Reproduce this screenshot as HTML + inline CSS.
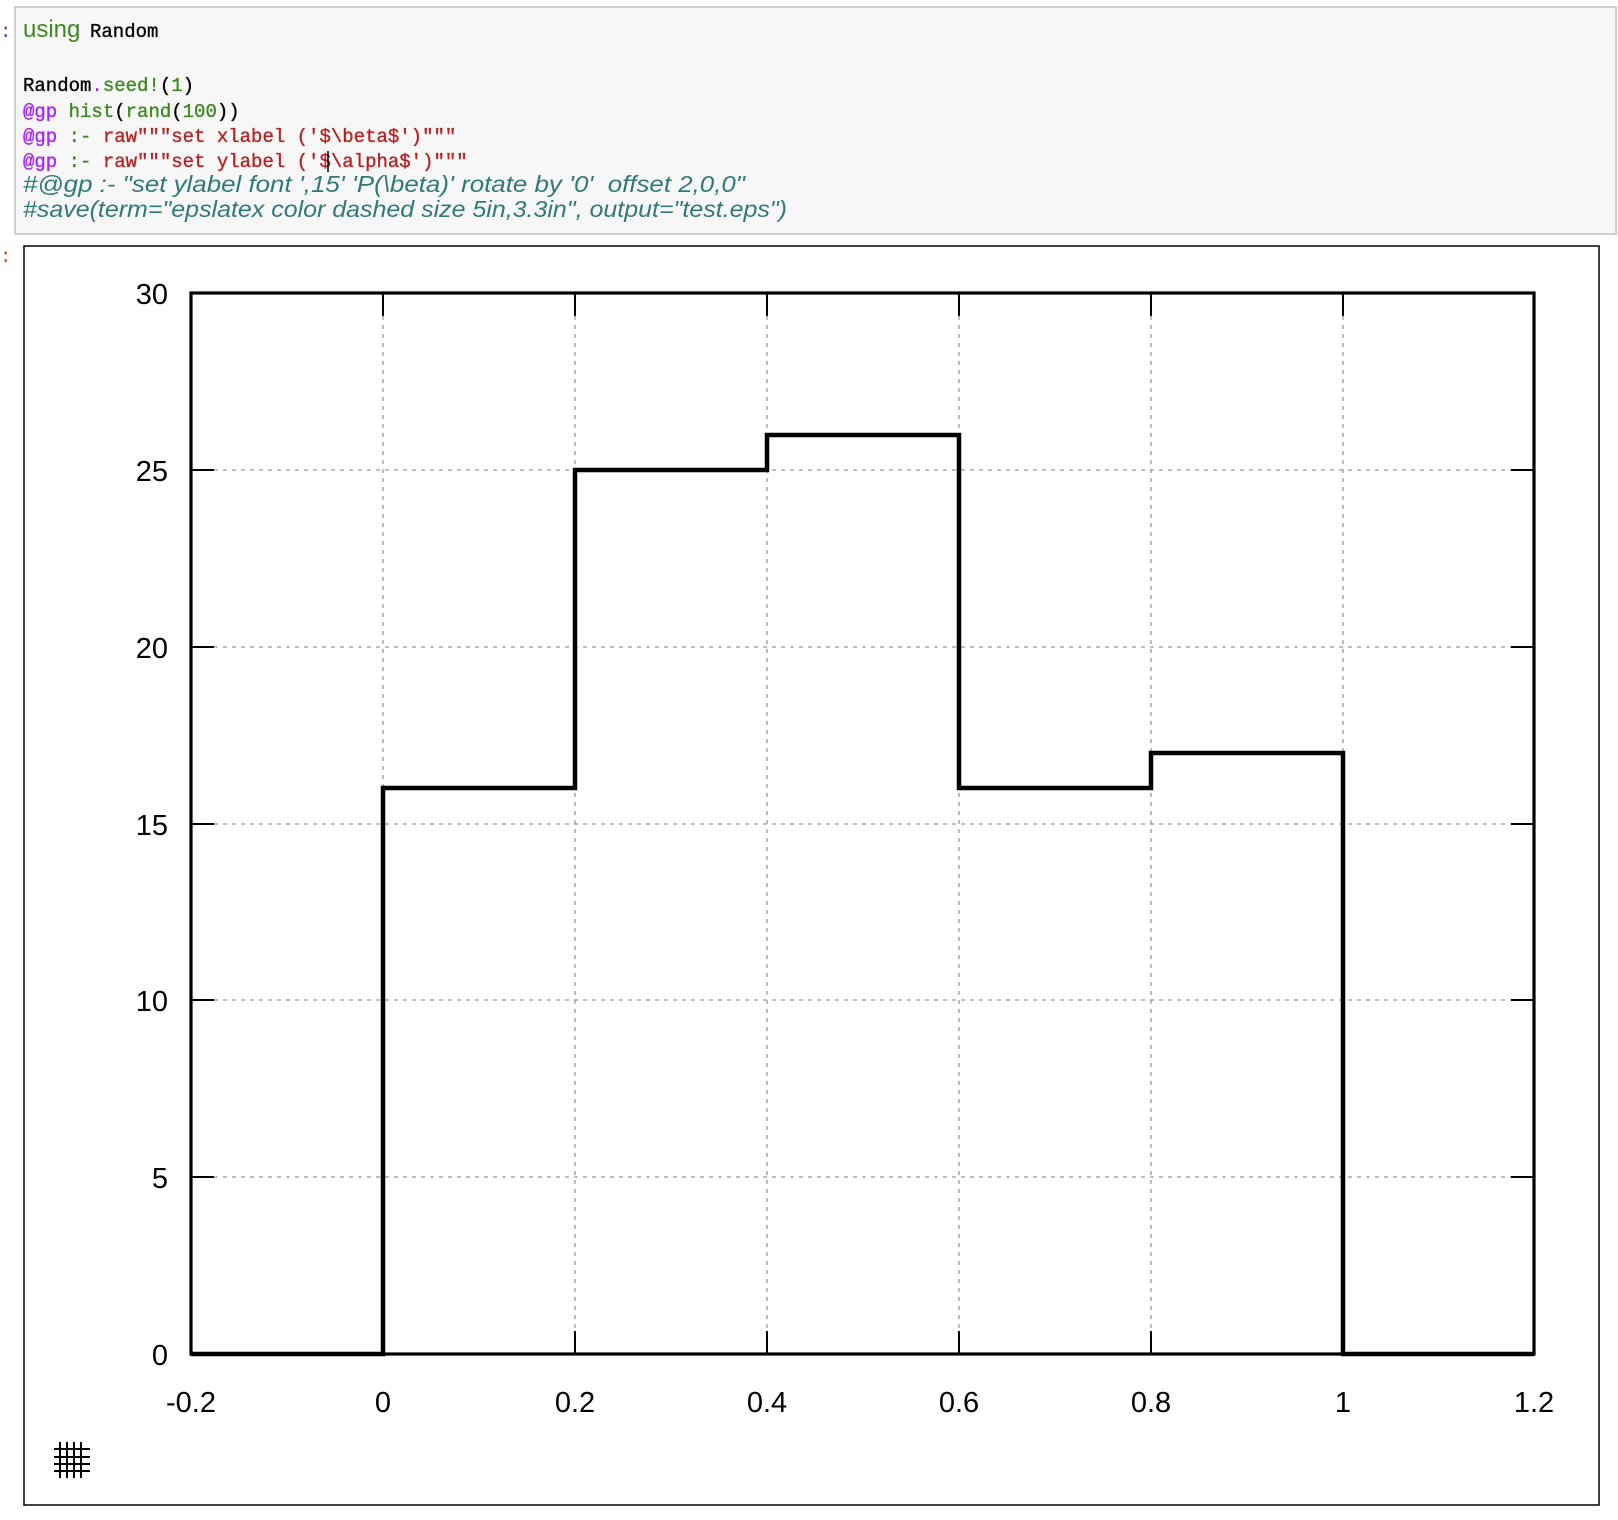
<!DOCTYPE html>
<html><head><meta charset="utf-8"><style>
html,body{margin:0;padding:0;background:#fff;width:1618px;height:1520px;overflow:hidden}
svg{display:block}
.m{font-family:"Liberation Mono",monospace;font-size:19px;stroke-width:0.35px}
.c{font-family:"Liberation Sans",sans-serif;font-style:italic;font-size:23px;fill:#2f7a78}
.t{font-family:"Liberation Sans",sans-serif;font-size:29px;fill:#000}
</style></head><body>
<svg width="1618" height="1520" viewBox="0 0 1618 1520" xmlns="http://www.w3.org/2000/svg">
<rect x="15" y="7" width="1601" height="227" fill="#f7f7f7" stroke="#cfcfcf" stroke-width="2"/>
<text x="0" y="37" fill="#3050c0" class="m">:</text>
<text x="0" y="262" fill="#d84315" class="m">:</text>
<text x="23" y="37" font-family="Liberation Sans,sans-serif" font-size="24" fill="#3b8a1e">using</text>
<text x="90" y="37" class="m" fill="#000" stroke="#000">Random</text>
<text x="23" y="91" class="m"><tspan fill="#000" stroke="#000">Random</tspan><tspan fill="#aa22ff">.</tspan><tspan fill="#3b8a1e" stroke="#3b8a1e">seed!</tspan><tspan fill="#000" stroke="#000">(</tspan><tspan fill="#3b8a1e" stroke="#3b8a1e">1</tspan><tspan fill="#000" stroke="#000">)</tspan></text>
<text x="23" y="117" class="m"><tspan fill="#aa22ff" stroke="#aa22ff">@gp</tspan><tspan fill="#3b8a1e" stroke="#3b8a1e"> hist</tspan><tspan fill="#000" stroke="#000">(</tspan><tspan fill="#3b8a1e" stroke="#3b8a1e">rand</tspan><tspan fill="#000" stroke="#000">(</tspan><tspan fill="#3b8a1e" stroke="#3b8a1e">100</tspan><tspan fill="#000" stroke="#000">))</tspan></text>
<text x="23" y="142" class="m" xml:space="preserve"><tspan fill="#aa22ff" stroke="#aa22ff">@gp</tspan><tspan fill="#3b8a1e" stroke="#3b8a1e"> :- </tspan><tspan fill="#ba2121" stroke="#ba2121">raw"""set xlabel ('$\beta$')"""</tspan></text>
<text x="23" y="167" class="m" xml:space="preserve"><tspan fill="#aa22ff" stroke="#aa22ff">@gp</tspan><tspan fill="#3b8a1e" stroke="#3b8a1e"> :- </tspan><tspan fill="#ba2121" stroke="#ba2121">raw"""set ylabel ('$\alpha$')"""</tspan></text>
<line x1="328" y1="151" x2="328" y2="172" stroke="#000" stroke-width="1.5"/>
<text x="23" y="192" class="c" textLength="722" lengthAdjust="spacingAndGlyphs" xml:space="preserve">#@gp :- "set ylabel font ',15' 'P(\beta)' rotate by '0'  offset 2,0,0"</text>
<text x="23" y="217" class="c" textLength="764" lengthAdjust="spacingAndGlyphs">#save(term="epslatex color dashed size 5in,3.3in", output="test.eps")</text>

<rect x="24" y="246" width="1575" height="1259" fill="#fff" stroke="#000" stroke-width="1.5"/>
<g stroke="#999" stroke-width="1.3" stroke-dasharray="4,5">
<line x1="383" y1="316" x2="383" y2="1331"/><line x1="575" y1="316" x2="575" y2="1331"/>
<line x1="767" y1="316" x2="767" y2="1331"/><line x1="959" y1="316" x2="959" y2="1331"/>
<line x1="1151" y1="316" x2="1151" y2="1331"/><line x1="1343" y1="316" x2="1343" y2="1331"/>
<line x1="214" y1="470" x2="1511" y2="470"/><line x1="214" y1="647" x2="1511" y2="647"/>
<line x1="214" y1="824" x2="1511" y2="824"/><line x1="214" y1="1000" x2="1511" y2="1000"/>
<line x1="214" y1="1177" x2="1511" y2="1177"/>
</g>
<g stroke="#000" stroke-width="2">
<rect x="191" y="293" width="1343" height="1061" fill="none" stroke-width="3.2"/>
<path d="M383 293v23M575 293v23M767 293v23M959 293v23M1151 293v23M1343 293v23
M383 1354v-23M575 1354v-23M767 1354v-23M959 1354v-23M1151 1354v-23M1343 1354v-23
M191 470h23M191 647h23M191 824h23M191 1000h23M191 1177h23
M1534 470h-23M1534 647h-23M1534 824h-23M1534 1000h-23M1534 1177h-23"/>
</g>
<path d="M191 1354H383V788H575V470H767V435H959V788H1151V753H1343V1354H1534" fill="none" stroke="#000" stroke-width="4.5"/>
<g class="t" text-anchor="end">
<text x="168" y="304">30</text><text x="168" y="481">25</text><text x="168" y="658">20</text>
<text x="168" y="835">15</text><text x="168" y="1011">10</text><text x="168" y="1188">5</text><text x="168" y="1365">0</text>
</g>
<g class="t" text-anchor="middle">
<text x="191" y="1412">-0.2</text><text x="383" y="1412">0</text><text x="575" y="1412">0.2</text>
<text x="767" y="1412">0.4</text><text x="959" y="1412">0.6</text><text x="1151" y="1412">0.8</text>
<text x="1343" y="1412">1</text><text x="1534" y="1412">1.2</text>
</g>
<g stroke="#000" stroke-width="2">
<path d="M60 1442v36M67 1442v36M74 1442v36M81 1442v36M54 1449h36M54 1457h36M54 1464h36M54 1471h36"/>
</g>
</svg>
</body></html>
